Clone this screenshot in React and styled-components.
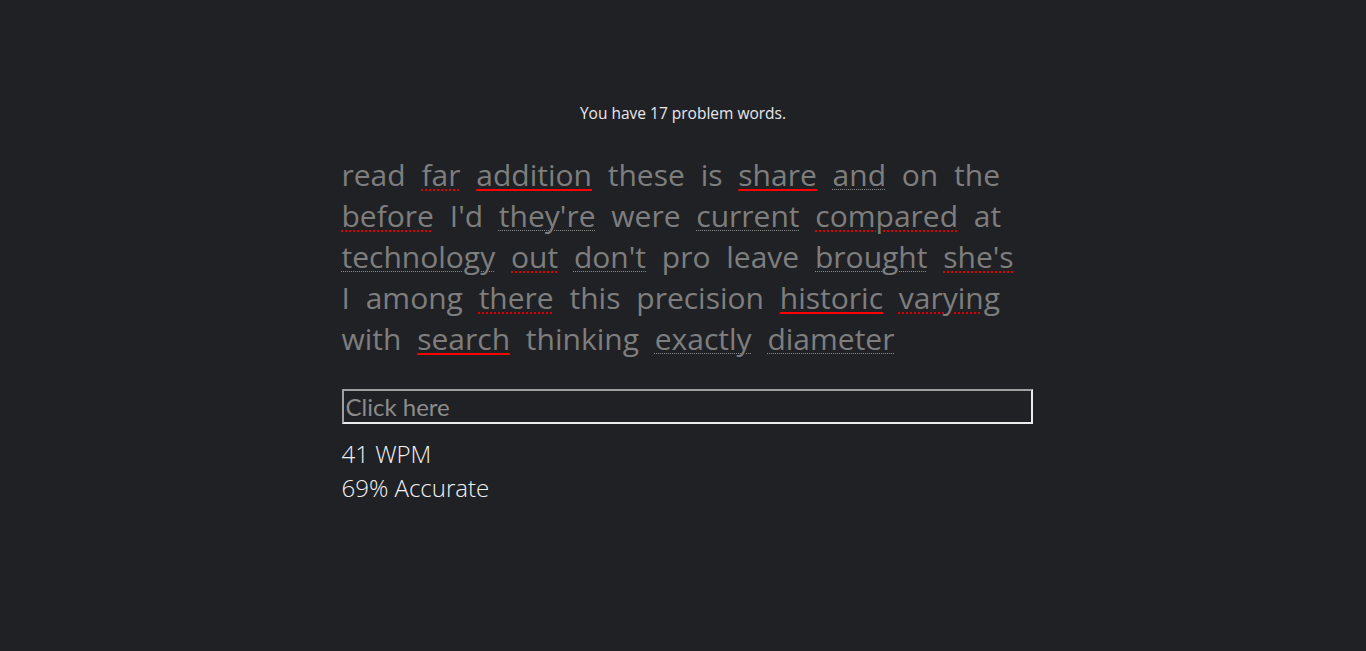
import React from 'react';
import styled, { createGlobalStyle } from 'styled-components';

const GlobalStyle = createGlobalStyle`
  html, body {
    margin: 0;
    padding: 0;
    background: #202125;
    min-height: 100%;
  }
  body {
    font-family: 'Open Sans', sans-serif;
    color: #e6e6e6;
  }
`;

const Page = styled.main`
  width: 50%;
  margin: 0 auto;
  padding-top: 103px;
`;

const Notice = styled.p`
  margin: 0;
  text-align: center;
  font-size: 15.5px;
  line-height: 21px;
  color: #e8e8ee;
`;

const Prompt = styled.p`
  margin: 30px 0 0;
  font-size: 30px;
  line-height: 41px;
  color: #7e7e7e;
  word-spacing: 8px;
`;

const decor = {
  hard: 'underline solid #ff0000 2px',
  miss: 'underline dotted #e00000 2px',
  seen: 'underline dotted #8a8a8a 1px',
};

const Word = styled.span`
  text-decoration: ${(p) => (p.$mark ? decor[p.$mark] : 'none')};
  text-decoration-skip-ink: auto;
  text-underline-offset: 3px;
`;

const Entry = styled.input`
  display: block;
  margin: 30px 0 0;
  padding: 1px 2px;
  border: 2px solid #ececec;
  border-top-color: #a0a0a0;
  border-left-color: #a0a0a0;
  background: transparent;
  font-family: Lato, 'Open Sans', sans-serif;
  font-size: 24px;
  line-height: 29px;
  height: 35px;
  box-sizing: border-box;
  width: calc(100% + 8px);
  color: #dddddd;
  outline: none;

  &::placeholder {
    color: #8c8c8c;
  }
`;

const Stats = styled.div`
  margin-top: 13px;
  font-size: 24px;
  font-weight: 300;
  line-height: 34px;
  color: #f2f2f2;
`;

const words = [
  ['read'], ['far', 'miss'], ['addition', 'hard'], ['these'], ['is'], ['share', 'hard'],
  ['and', 'seen'], ['on'], ['the'],
  ['before', 'miss'], ["I'd"], ["they're", 'seen'], ['were'], ['current', 'seen'],
  ['compared', 'miss'], ['at'],
  ['technology', 'seen'], ['out', 'miss'], ["don't", 'seen'], ['pro'], ['leave'],
  ['brought', 'seen'], ["she's", 'miss'],
  ['I'], ['among'], ['there', 'miss'], ['this'], ['precision'], ['historic', 'hard'],
  ['varying', 'miss'],
  ['with'], ['search', 'hard'], ['thinking'], ['exactly', 'seen'], ['diameter', 'seen'],
];

export default function App() {
  return (
    <>
      <GlobalStyle />
      <Page>
        <Notice>You have 17 problem words.</Notice>
        <Prompt>
          {words.map(([text, mark], i) => (
            <React.Fragment key={i}>
              <Word $mark={mark}>{text}</Word>
              {i < words.length - 1 ? ' ' : ''}
            </React.Fragment>
          ))}
        </Prompt>
        <Entry placeholder="Click here" />
        <Stats>
          <div>41 WPM</div>
          <div>69% Accurate</div>
        </Stats>
      </Page>
    </>
  );
}
